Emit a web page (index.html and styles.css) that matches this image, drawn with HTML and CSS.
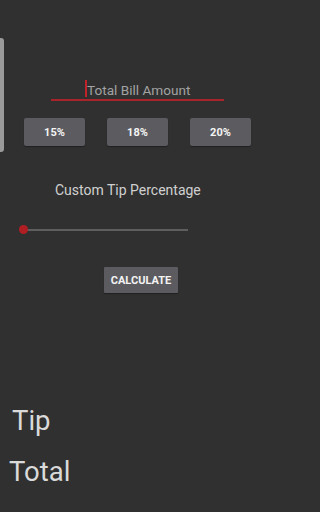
FILE: index.html
```html
<!DOCTYPE html>
<html>
<head>
<meta charset="utf-8">
<link rel="stylesheet" href="styles.css">
</head>
<body>
<div class="edge"></div>
<div class="app">
  <div class="field"><span class="caret"></span><span class="hint">Total Bill Amount</span></div>
  <div class="tips">
    <div class="btn">15%</div>
    <div class="btn">18%</div>
    <div class="btn">20%</div>
  </div>
  <div class="label">Custom Tip Percentage</div>
  <div class="slider"><span class="thumb"></span><span class="track"></span></div>
  <div class="calc">CALCULATE</div>
  <div class="result tip">Tip</div>
  <div class="result total">Total</div>
</div>
</body>
</html>
```
FILE: styles.css
```css
html, body {
  margin: 0;
  padding: 0;
  background: #303030;
  height: 100%;
}
body {
  font-family: Roboto, "Liberation Sans", sans-serif;
  color: #d6d6d6;
  position: relative;
  overflow: hidden;
}
.edge {
  position: absolute;
  left: 0;
  top: 38px;
  width: 4px;
  height: 114px;
  background: #9a9a9a;
  border-radius: 0 3px 3px 0;
}
.app {
  display: flex;
  flex-direction: column;
  align-items: flex-start;
  padding-top: 80px;
}
.field {
  margin-left: 51px;
  width: 173px;
  height: 19px;
  border-bottom: 2px solid #a8232a;
  display: flex;
  align-items: flex-start;
}
.caret {
  margin-left: 34px;
  width: 1.5px;
  height: 17px;
  background: #c0232a;
}
.hint {
  font-size: 13.6px;
  line-height: 20px;
  color: #a2a2a2;
  margin-left: 0.5px;
}
.tips {
  display: flex;
  gap: 22px;
  margin-left: 24px;
  margin-top: 17px;
}
.btn {
  width: 61px;
  height: 28px;
  background: #5c5c60;
  border-radius: 2px;
  box-shadow: 0 1px 1px rgba(0,0,0,0.35);
  color: #f4f4f4;
  font-size: 11px;
  font-weight: 700;
  display: flex;
  align-items: center;
  justify-content: center;
}
.label {
  margin-left: 55px;
  margin-top: 34px;
  font-size: 14px;
  line-height: 20px;
  color: #d0d0d0;
}
.slider {
  margin-left: 19px;
  margin-top: 25px;
  width: 169px;
  height: 9px;
  display: flex;
  align-items: center;
  position: relative;
}
.thumb {
  position: absolute;
  left: 0;
  top: 0;
  width: 9px;
  height: 9px;
  border-radius: 50%;
  background: #b01e24;
}
.track {
  margin-left: 5px;
  flex: 1;
  height: 2px;
  background: #5e5e5e;
}
.calc {
  margin-left: 104px;
  margin-top: 33px;
  width: 74px;
  height: 26px;
  background: #5c5c60;
  border-radius: 1px;
  box-shadow: 0 1px 1px rgba(0,0,0,0.35);
  color: #f4f4f4;
  font-size: 11px;
  font-weight: 700;
  display: flex;
  align-items: center;
  justify-content: center;
}
.result {
  font-size: 27.5px;
  line-height: 30px;
  color: #dadada;
}
.tip {
  margin-left: 12px;
  margin-top: 113px;
}
.total {
  margin-left: 9px;
  margin-top: 21px;
}
```
